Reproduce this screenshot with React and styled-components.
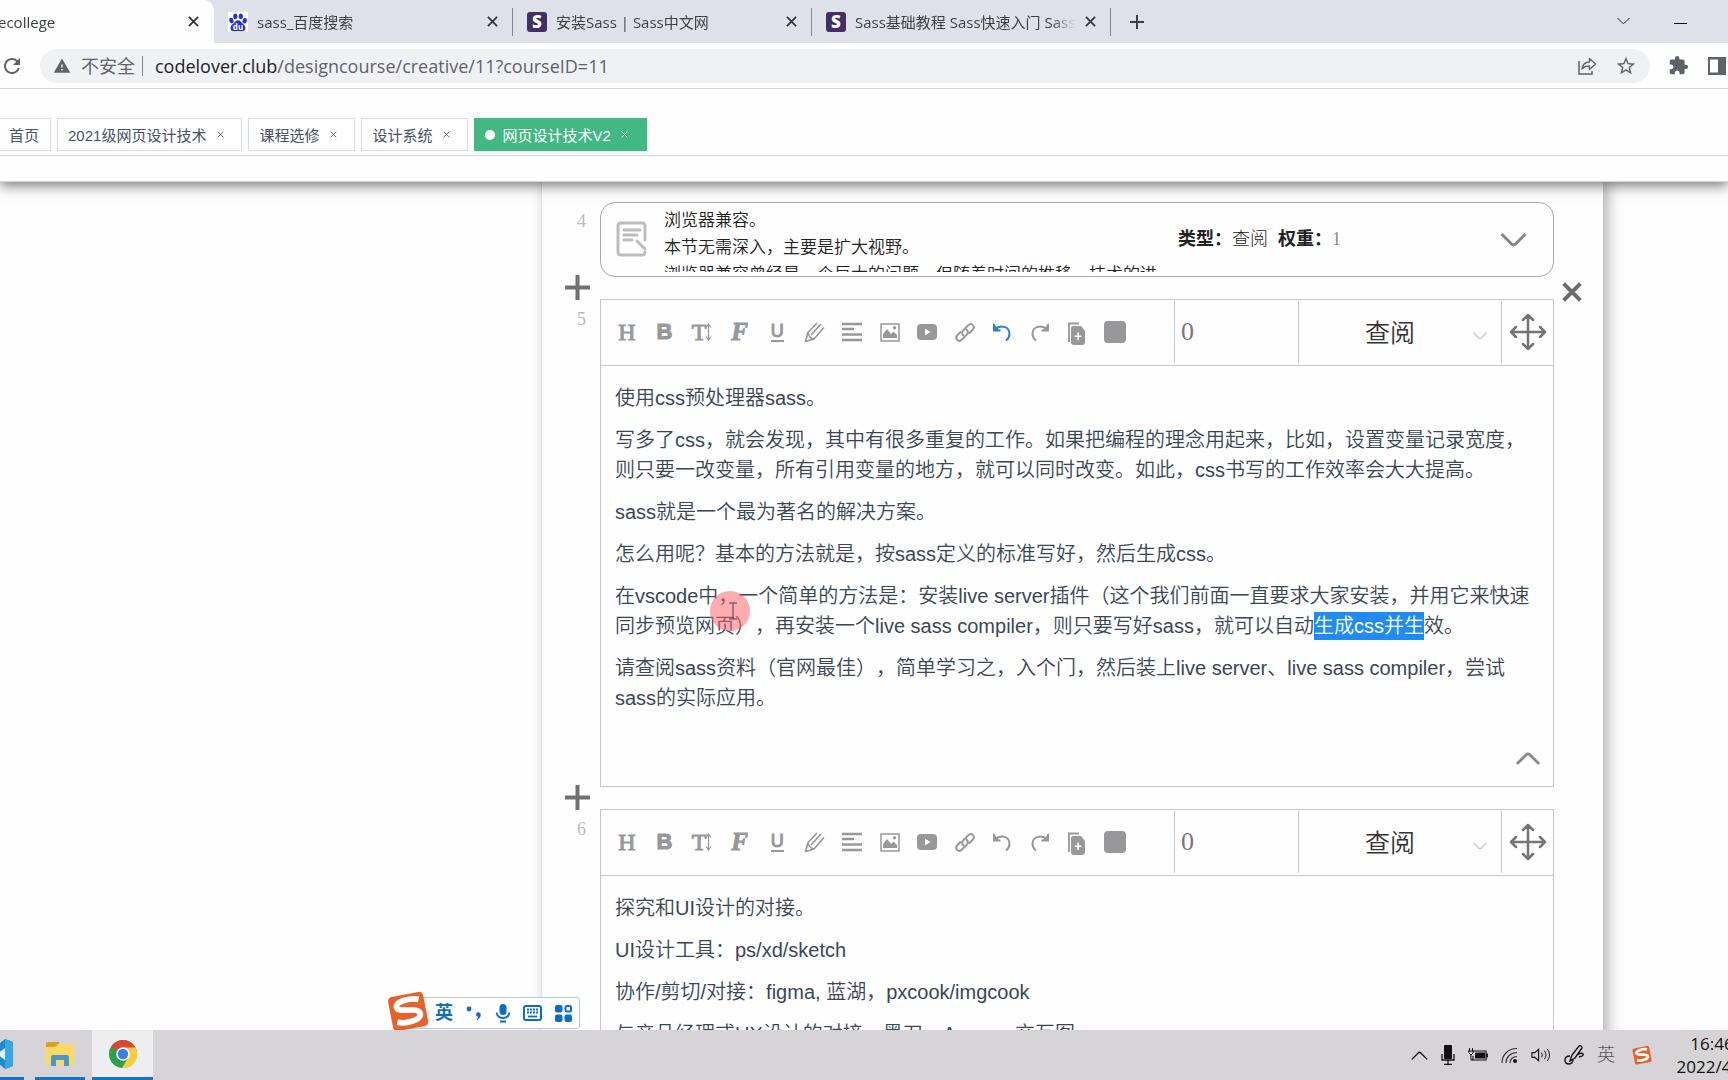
import React from "react";
import styled, { createGlobalStyle, css } from "styled-components";
import {
  MdExtension,
  MdStarBorder,
  MdRefresh,
  MdWarning,
} from "react-icons/md";

const GlobalStyle = createGlobalStyle`
  * {
    box-sizing: border-box;
  }

  body {
    margin: 0;
    background: #fefefe;
    color: #2c3e50;
    font-family: "Liberation Sans", "Noto Sans CJK SC", sans-serif;
    text-spacing-trim: space-all;
  }

  button {
    padding: 0;
    border: 0;
    background: none;
    color: inherit;
    font: inherit;
  }

  svg {
    flex-shrink: 0;
  }
`;

const browserTabs = [
  { title: "sass_百度搜索", icon: "baidu" },
  { title: "安装Sass | Sass中文网", icon: "sass" },
  { title: "Sass基础教程 Sass快速入门 Sass", icon: "sass" },
];

const pageTags = [
  { title: "2021级网页设计技术" },
  { title: "课程选修" },
  { title: "设计系统" },
  { title: "网页设计技术V2", active: true },
];

const CloseIcon = ({ size = 11, width = 2 }) => (
  <svg width={size} height={size} viewBox="0 0 12 12" aria-hidden="true">
    <path d="M1 1l10 10M11 1L1 11" stroke="currentColor" strokeWidth={width} />
  </svg>
);

const PlusIcon = ({ size, width }) => (
  <svg width={size} height={size} viewBox={`0 0 ${size} ${size}`} aria-hidden="true">
    <path
      d={`M${size / 2} 0V${size}M0 ${size / 2}H${size}`}
      stroke="currentColor"
      strokeWidth={width}
    />
  </svg>
);

const ChevronIcon = ({ width, height, stroke, up }) => (
  <svg width={width} height={height} viewBox="0 0 26 14" fill="none" aria-hidden="true">
    <path
      d={up ? "M1 13L11 3q2-2 4 0L25 13" : "M1 1l10 10q2 2 4 0L25 1"}
      stroke="currentColor"
      strokeWidth={stroke}
    />
  </svg>
);

const BaiduIcon = () => (
  <svg width="20" height="20" viewBox="0 0 20 20" aria-hidden="true">
    <rect width="20" height="20" fill="#fff" />
    <g fill="#2a32cf">
      <ellipse cx="3.4" cy="8.6" rx="2.1" ry="2.8" transform="rotate(-12 3.4 8.6)" />
      <ellipse cx="7.3" cy="4.3" rx="2.1" ry="2.9" />
      <ellipse cx="12.8" cy="4.3" rx="2.1" ry="2.9" />
      <ellipse cx="16.7" cy="8.8" rx="2.1" ry="2.8" transform="rotate(12 16.7 8.8)" />
      <path d="M10 8.2c2 0 3 1.6 4.3 3 1.6 1.5 3.2 2.5 3.2 4.7 0 2.2-1.5 3.4-3.500 3.4-1.500 0-2.500-.3-4-.3s-2.500.3-4 .3c-2 0-3.500-1.200-3.500-3.400 0-2.200 1.600-3.200 3.200-4.700C7 9.800 8 8.200 10 8.200z" />
    </g>
    <text x="10" y="17.500" fill="#fff" fontSize="8" fontWeight="700" textAnchor="middle">
      du
    </text>
  </svg>
);

const ShareIcon = () => (
  <svg width="20" height="20" viewBox="0 0 20 20" fill="none" aria-hidden="true">
    <path d="M2 5v13h13v-3" stroke="currentColor" strokeWidth="1.500" />
    <path
      d="M5 13c.6-4.500 3.200-6.800 7.500-7V2.500L18.500 8l-6 5.500V10C9 10 6.800 11 5 13z"
      stroke="currentColor"
      strokeWidth="1.400"
      strokeLinejoin="round"
    />
  </svg>
);

const SidePanelIcon = () => (
  <svg width="20" height="20" viewBox="0 0 20 20" aria-hidden="true">
    <path d="M1 1h18v18H1zM3 3.500v13h8v-13z" fill="currentColor" fillRule="evenodd" />
  </svg>
);

const NoteIcon = () => (
  <svg width="32" height="36" viewBox="0 0 32 36" fill="none" aria-hidden="true">
    <g stroke="#bdbdbf" strokeWidth="3" strokeLinecap="round">
      <path d="M29 19V5q0-3-3-3H5Q2 2 2 5v26q0 3 3 3h21q3 0 3-3" />
      <path d="M8 9h16M8 14h13M8 19h8M21 20l8 8" />
    </g>
  </svg>
);

const MoveIcon = () => (
  <svg width="38" height="38" viewBox="0 0 38 38" fill="none" aria-hidden="true">
    <path
      d="M19 2v34M2 19h34M14 7l5-5 5 5M14 31l5 5 5-5M7 14l-5 5 5 5M31 14l5 5-5 5"
      stroke="#747477"
      strokeWidth="2.500"
      strokeLinecap="round"
      strokeLinejoin="round"
    />
  </svg>
);

const UndoPath = "M3 3v6.500h6.500M4 8.500C9 3.500 18.500 5 18.500 13c0 3-1.500 5-3.500 6.500";

const toolIcons = {
  size: (
    <path d="M18.500 4v14M16 6.500L18.500 3 21 6.500M16 15.500l2.500 3.500 2.500-3.500" fill="none" stroke="currentColor" strokeWidth="1.200" />
  ),
  brush: (
    <g fill="none" stroke="currentColor" strokeWidth="1.700" strokeLinejoin="round">
      <path d="M13 2L4 11.500 1.500 20.500 10 18 20 6.500" />
      <path d="M7 14L17 3M4 11.500q.5 5 6 6.500" />
    </g>
  ),
  align: (
    <path d="M1 3h20M1 8h12M1 13.500h20M1 19h20" stroke="currentColor" strokeWidth="2.600" fill="none" />
  ),
  image: (
    <>
      <path d="M2 3h18v17H2z" fill="none" stroke="currentColor" strokeWidth="1.500" />
      <path d="M4 17v-4l4-5 4 5 2.500-2.500L18 14v3z" fill="currentColor" />
      <circle cx="15.500" cy="6.800" r="1.700" fill="currentColor" />
    </>
  ),
  video: (
    <path fillRule="evenodd" d="M5 3h12q4 0 4 4v8q0 4-4 4H5q-4 0-4-4V7q0-4 4-4zM9 7.500v7l5.500-3.500z" fill="currentColor" />
  ),
  link: (
    <g fill="none" stroke="currentColor" strokeWidth="1.900" strokeLinecap="round">
      <path d="M9.500 14.500c-2-2-1.500-4 0-5.500L14 4.500c3.500-3.500 8 1 4.500 4.500l-3 3" />
      <path d="M12.500 8.500c2 2 1.500 4 0 5.500L8 18.500c-3.500 3.500-8-1-4.500-4.500l3-3" />
    </g>
  ),
  undo: (
    <>
      <path d={UndoPath} fill="none" stroke="currentColor" strokeWidth="2" />
      <path d="M2 2v8h7z" fill="currentColor" />
    </>
  ),
  redo: (
    <g transform="matrix(-1 0 0 1 22 0)">
      <path d={UndoPath} fill="none" stroke="currentColor" strokeWidth="2" />
      <path d="M2 2v8h7z" fill="currentColor" />
    </g>
  ),
  copy: (
    <>
      <path d="M3 21V2.500h10" fill="none" stroke="currentColor" strokeWidth="1.800" />
      <path fillRule="evenodd" d="M7 5h8l4 5v11q0 3-3 3H8q-3 0-3-3V7q0-2 2-2zM11.300 11.500v3h-2.500v1.600h2.500v3h1.600v-3h2.500v-1.600h-2.500v-3z" fill="currentColor" />
    </>
  ),
  block: <rect x="0" y="0" width="22" height="22" rx="4" fill="currentColor" />,
};

const tools = [
  { name: "标题", glyph: "H", look: "serif" },
  { name: "加粗", glyph: "B", look: "bold" },
  { name: "字号", glyph: "T", look: "serif", icon: "size" },
  { name: "字体", glyph: "F", look: "script" },
  { name: "下划线", glyph: "U", look: "underline" },
  { name: "文字颜色", icon: "brush" },
  { name: "对齐", icon: "align" },
  { name: "图片", icon: "image" },
  { name: "视频", icon: "video" },
  { name: "链接", icon: "link" },
  { name: "撤销", icon: "undo" },
  { name: "恢复", icon: "redo" },
  { name: "复制", icon: "copy" },
  { name: "背景", icon: "block" },
];

const SogouIcon = ({ size }) => (
  <svg width={size} height={size} viewBox="0 0 40 40" aria-hidden="true">
    <g transform="rotate(-11 20 20)">
      <rect x="3" y="4" width="34" height="33" rx="4" fill="#e9602d" />
      <path
        d="M32 11C25 8 10 8.500 10 14.500c0 6 21 3 21 10 0 6.500-15 7.500-23 4"
        fill="none"
        stroke="#fff"
        strokeWidth="5.500"
      />
    </g>
  </svg>
);

const Editor = ({ number, undoActive, cursor, children }) => (
  <EditorRow>
    <Gutter>
      <AddButton aria-label="添加">
        <PlusIcon size={25} width={4} />
      </AddButton>
      <RowNumber>{number}</RowNumber>
    </Gutter>
    <EditorBox>
      <Toolbar>
        <Tools>
          {tools.map((tool) => (
            <ToolButton
              key={tool.name}
              aria-label={tool.name}
              $active={undoActive && tool.icon === "undo"}
            >
              {tool.glyph && <Glyph $look={tool.look}>{tool.glyph}</Glyph>}
              {tool.icon && (
                <ToolSvg viewBox="0 0 22 22" $over={!!tool.glyph} aria-hidden="true">
                  {toolIcons[tool.icon]}
                </ToolSvg>
              )}
            </ToolButton>
          ))}
        </Tools>
        <WeightInput aria-label="权重" defaultValue="0" />
        <SelectWrap>
          <TypeSelect aria-label="类型" defaultValue="查阅">
            <option>查阅</option>
          </TypeSelect>
          <SelectArrow>
            <ChevronIcon width={14} height={8} stroke={2} />
          </SelectArrow>
        </SelectWrap>
        <MoveButton aria-label="移动">
          <MoveIcon />
        </MoveButton>
      </Toolbar>
      <EditorText
        contentEditable
        suppressContentEditableWarning
        spellCheck={false}
        role="textbox"
        aria-label="内容"
      >
        {children}
      </EditorText>
      <EditorFooter>
        <FoldButton aria-label="收起">
          <ChevronIcon width={26} height={13} stroke={3} up />
        </FoldButton>
      </EditorFooter>
      {cursor && (
        <CursorSpot>
          <svg width="8" height="18" viewBox="0 0 8 18" aria-hidden="true">
            <path d="M0 1h8M0 17h8M4 1v16" stroke="#444" strokeWidth="1" />
          </svg>
        </CursorSpot>
      )}
    </EditorBox>
    <RowEnd>
      {cursor && (
        <RemoveButton aria-label="删除">
          <CloseIcon size={20} width={2.4} />
        </RemoveButton>
      )}
    </RowEnd>
  </EditorRow>
);

const BrowserBar = () => (
  <Browser>
    <TabStrip>
      <ActiveTab>
        <TabTitle>ecollege</TabTitle>
        <TabClose aria-label="关闭">
          <CloseIcon />
        </TabClose>
      </ActiveTab>
      {browserTabs.map((tab) => (
        <BrowserTab key={tab.title}>
          {tab.icon === "baidu" ? <BaiduIcon /> : <SassIcon>S</SassIcon>}
          <TabTitle>{tab.title}</TabTitle>
          <TabClose aria-label="关闭">
            <CloseIcon />
          </TabClose>
        </BrowserTab>
      ))}
      <NewTab aria-label="新标签页">
        <PlusIcon size={14} width={2} />
      </NewTab>
      <WindowButtons>
        <button aria-label="搜索标签页">
          <ChevronIcon width={13} height={8} stroke={2} />
        </button>
        <button aria-label="最小化">
          <svg width="13" height="2" aria-hidden="true">
            <rect width="13" height="1" fill="#111" />
          </svg>
        </button>
      </WindowButtons>
    </TabStrip>
    <AddressRow>
      <IconButton aria-label="刷新">
        <MdRefresh size={24} />
      </IconButton>
      <AddressBar>
        <MdWarning size={18} />
        <Insecure>不安全</Insecure>
        <Url>
          <b>codelover.club</b>/designcourse/creative/11?courseID=11
        </Url>
        <IconButton aria-label="分享">
          <ShareIcon />
        </IconButton>
        <IconButton aria-label="收藏">
          <MdStarBorder size={22} />
        </IconButton>
      </AddressBar>
      <IconButton aria-label="扩展程序">
        <MdExtension size={21} />
      </IconButton>
      <IconButton aria-label="侧边栏">
        <SidePanelIcon />
      </IconButton>
    </AddressRow>
  </Browser>
);

const TagBar = () => (
  <Header>
    <Tags>
      <HomeTag href="#home">首页</HomeTag>
      {pageTags.map((tag) => (
        <Tag key={tag.title} $active={tag.active}>
          {tag.active && <Dot />}
          <TagLink href="#tag">{tag.title}</TagLink>
          <TagClose aria-label="关闭">
            <CloseIcon size={7} width={1.4} />
          </TagClose>
        </Tag>
      ))}
    </Tags>
  </Header>
);

const ImeBar = () => (
  <Ime>
    <ImeLogo>
      <SogouIcon size={42} />
    </ImeLogo>
    <ImeText>英</ImeText>
    <svg width="16" height="16" viewBox="0 0 16 16" fill="#0f6cc4" aria-hidden="true">
      <circle cx="3" cy="4" r="2.400" />
      <path d="M10 9.500a2.400 2.400 0 1 1 4.800.3q-.2 3.700-3.600 5.200l-.6-1q1.600-1 1.700-2.200-2.200 0-2.300-2.300z" />
    </svg>
    <svg width="16" height="20" viewBox="0 0 16 20" fill="none" aria-hidden="true">
      <rect x="4.500" y="1" width="7" height="11" rx="3.500" fill="#0f6cc4" />
      <path d="M1.500 9.500q1 5.500 6.500 5.500t6.500-5.500M5 18.500h6" stroke="#0f6cc4" strokeWidth="1.800" />
    </svg>
    <svg width="19" height="16" viewBox="0 0 19 16" fill="none" stroke="#0f6cc4" aria-hidden="true">
      <rect x="1" y="1" width="17" height="14" rx="2" strokeWidth="2" />
      <path d="M4 4.500h11M4 7.500h11" strokeWidth="1.800" strokeDasharray="2 1" />
      <path d="M5 11.500h9" strokeWidth="1.800" />
    </svg>
    <svg width="17" height="17" viewBox="0 0 17 17" fill="#0f6cc4" aria-hidden="true">
      <rect width="7.500" height="7.500" rx="2" />
      <rect y="9.500" width="7.500" height="7.500" rx="2" />
      <rect x="9.500" y="9.500" width="7.500" height="7.500" rx="2" />
      <rect x="10.500" y="1" width="5.500" height="5.500" rx="1.500" fill="none" stroke="#0f6cc4" strokeWidth="2" />
    </svg>
  </Ime>
);

const SystemBar = () => (
  <Taskbar>
    <Task $width={24} aria-label="Visual Studio Code">
      <svg width="28" height="30" viewBox="0 0 28 30" aria-hidden="true">
        <path d="M20 0l8 3v24l-8 3L4 16v-3z" fill="#2389ca" />
        <path d="M20 0l8 3v24l-8 3z" fill="#35a7e8" />
        <path d="M20 9v12l-8-6z" fill="#e4edf3" />
      </svg>
    </Task>
    <Task $width={50} aria-label="文件资源管理器">
      <svg width="28" height="24" viewBox="0 0 28 24" aria-hidden="true">
        <path d="M0 2q0-2 2-2h11v5H0z" fill="#d9a01f" />
        <path d="M0 5h9l3-3h14q2 0 2 2v19H0z" fill="#fcd965" />
        <path d="M5 24V15q0-2 2-2h14q2 0 2 2v9h-5v-6h-8v6z" fill="#4b97cc" />
      </svg>
    </Task>
    <Task $width={61} $open aria-label="Google Chrome">
      <svg width="28" height="28" viewBox="0 0 28 28" aria-hidden="true">
        <circle cx="14" cy="14" r="14" fill="#2f9e4f" />
        <path d="M14 14L1.900 7A14 14 0 0 1 26.100 7z" fill="#dd4436" />
        <path d="M14 7.500h12.500A14 14 0 0 1 13 28l6.500-11z" fill="#fbcd36" />
        <circle cx="14" cy="14" r="6.800" fill="#fff" />
        <circle cx="14" cy="14" r="5.200" fill="#3b7de9" />
      </svg>
    </Task>
    <Tray>
      <ChevronIcon width={17} height={9} stroke={2} up />
      <svg width="14" height="20" viewBox="0 0 14 20" aria-hidden="true">
        <rect x="3" width="8" height="14" rx="1" fill="#111" />
        <path d="M1 9v6h12V9M7 15v4M3 19.300h8" fill="none" stroke="#111" strokeWidth="1.300" />
      </svg>
      <svg width="20" height="14" viewBox="0 0 20 14" aria-hidden="true">
        <path d="M6 3h12v9H5V8" fill="none" stroke="#111" strokeWidth="1.200" />
        <path d="M7 4.500h10v6H7zM18.500 5.500H20v4h-1.500z" fill="#111" />
        <path d="M1.500 0v3M4.500 0v3M0 3h6M1 3v2l2 2 2-2V3M3 7v5h2" fill="none" stroke="#111" />
      </svg>
      <svg width="17" height="16" viewBox="0 0 17 16" fill="none" aria-hidden="true">
        <path d="M1 16C1 8 7 1.500 16 1.500M5 16c0-6 4.500-10.500 11-10.500M9 16c0-4 3-6.500 7-6.500" stroke="#333" strokeWidth="1.100" />
        <circle cx="14" cy="14" r="2" fill="#111" />
      </svg>
      <svg width="20" height="16" viewBox="0 0 21 16" fill="none" stroke="#111" aria-hidden="true">
        <path d="M1 5.500h3L8 2v12l-4-3.500H1z" strokeWidth="1.200" />
        <path d="M11 5.500q2 2.500 0 5M14 3.500q3.500 4.500 0 9M17 1.500q5 6.500 0 13" />
      </svg>
      <svg width="20" height="20" viewBox="0 0 20 20" fill="none" stroke="#111" aria-hidden="true">
        <path d="M6 16l2-6 7-9q3-1 3 2l-7 10zM6 11q-5 0-5 4t4 4 4-5M13 10q5-3 6-1t-4 3" strokeWidth="1.400" />
      </svg>
      <TrayText>英</TrayText>
      <SogouIcon size={20} />
      <Clock>
        <span>16:46</span>
        <span>2022/4/7</span>
      </Clock>
    </Tray>
  </Taskbar>
);

export default function App() {
  return (
    <Screen>
      <GlobalStyle />
      <BrowserBar />
      <TagBar />
      <Main>
        <Panel>
          <SummaryRow>
            <Gutter>
              <RowNumber>4</RowNumber>
            </Gutter>
            <SummaryCard>
              <NoteIcon />
              <SummaryText>
                <div>浏览器兼容。</div>
                <div>本节无需深入，主要是扩大视野。</div>
                <div>浏览器兼容曾经是一个巨大的问题，但随着时间的推移，技术的进</div>
              </SummaryText>
              <SummaryMeta>
                <strong>类型：</strong>
                <span>查阅</span>
                <strong>权重：</strong>
                <MetaNumber>1</MetaNumber>
              </SummaryMeta>
              <ExpandButton aria-label="展开">
                <ChevronIcon width={27} height={14} stroke={3} />
              </ExpandButton>
            </SummaryCard>
            <RowEnd />
          </SummaryRow>
          <Editor number={5} undoActive cursor>
            <p>使用css预处理器sass。</p>
            <p>
              写多了css，就会发现，其中有很多重复的工作。如果把编程的理念用起来，比如，设置变量记录宽度，则只要一改变量，所有引用变量的地方，就可以同时改变。如此，css书写的工作效率会大大提高。
            </p>
            <p>sass就是一个最为著名的解决方案。</p>
            <p>怎么用呢？基本的方法就是，按sass定义的标准写好，然后生成css。</p>
            <p>
              在vscode中，一个简单的方法是：安装live server插件（这个我们前面一直要求大家安装，并用它来快速同步预览网页），再安装一个live sass compiler，则只要写好sass，就可以自动
              <Selected>生成css并生</Selected>效。
            </p>
            <p>
              请查阅sass资料（官网最佳），简单学习之，入个门，然后装上live server、live sass compiler，尝试sass的实际应用。
            </p>
          </Editor>
          <Editor number={6}>
            <p>探究和UI设计的对接。</p>
            <p>UI设计工具：ps/xd/sketch</p>
            <p>协作/剪切/对接：figma, 蓝湖，pxcook/imgcook</p>
            <p>与产品经理或UX设计的对接，墨刀、Axure，交互图</p>
          </Editor>
        </Panel>
        <ImeBar />
      </Main>
      <SystemBar />
    </Screen>
  );
}

const Screen = styled.div`
  height: 100vh;
  display: flex;
  flex-direction: column;
  overflow: hidden;
`;

const Browser = styled.div`
  position: relative;
  z-index: 3;
  flex: none;
  background: #fefefe;
  border-bottom: 1px solid #d6d6d9;
  color: #3c4043;
  font-family: "Open Sans", "Noto Sans CJK SC", sans-serif;
  font-size: 15px;
`;

const TabStrip = styled.div`
  height: 43px;
  display: flex;
  align-items: center;
  background: #dee1ea;
`;

const ActiveTab = styled.div`
  width: 216px;
  height: 43px;
  display: flex;
  align-items: center;
  padding: 0 15px 0 0;
  margin-left: -2px;
  background: #fefefe;
  border-radius: 0 10px 0 0;
`;

const BrowserTab = styled.div`
  width: 299px;
  height: 28px;
  display: flex;
  align-items: center;
  gap: 9px;
  padding: 0 14px 0 14px;
  border-right: 1px solid #85888f;
`;

const TabTitle = styled.span`
  flex: 1;
  overflow: hidden;
  white-space: nowrap;
  mask-image: linear-gradient(to left, transparent, #000 24px);
`;

const TabClose = styled.button`
  display: flex;
  align-items: center;
  color: #33363a;
`;

const SassIcon = styled.span`
  width: 20px;
  height: 20px;
  flex: none;
  border-radius: 3px;
  background: #432f63;
  color: #fff;
  font-weight: 800;
  font-size: 17px;
  line-height: 20px;
  text-align: center;
`;

const NewTab = styled.button`
  display: flex;
  margin-left: 19px;
`;

const WindowButtons = styled.div`
  flex: 1;
  display: flex;
  align-items: center;
  justify-content: flex-end;
  gap: 44px;
  padding: 0 41px 6px 0;
  color: #222;
`;

const AddressRow = styled.div`
  height: 45px;
  display: flex;
  align-items: center;
  gap: 18px;
  color: #5f6368;
`;

const AddressBar = styled.div`
  flex: 1;
  height: 34px;
  display: flex;
  align-items: center;
  gap: 18px;
  margin-left: -18px;
  padding: 0 12px 0 13px;
  border-radius: 17px;
  background: #f0f1f5;
`;

const Insecure = styled.span`
  margin-left: -8px;
  padding-right: 7px;
  border-right: 1px solid #85888f;
  font-size: 18px;
  line-height: 20px;
`;

const Url = styled.span`
  flex: 1;
  margin-left: -6px;
  font-size: 18px;
  line-height: 20px;

  b {
    font-weight: 400;
    color: #202124;
  }
`;

const IconButton = styled.button`
  display: flex;
  align-items: center;

  &:first-child {
    padding-right: 16px;
  }

  &:last-child {
    margin-right: 1px;
  }
`;

const Header = styled.header`
  position: relative;
  z-index: 2;
  flex: none;
  padding: 29px 0 25px;
  background: #fefefe;
  border-bottom: 1px solid #d3d3d3;
  box-shadow: 0 4px 12px rgba(0, 0, 0, 0.5);
`;

const Tags = styled.nav`
  display: flex;
  gap: 6px;
  padding-bottom: 4px;
  border-bottom: 1px solid #d8dadd;
  font-size: 15px;
`;

const tagBox = css`
  height: 33px;
  display: flex;
  align-items: center;
  border: 1px solid #d8dce5;
  color: #495060;
  background: #fff;
`;

const HomeTag = styled.a`
  ${tagBox}
  padding: 0 11px 0 9px;
  border-left: 0;
  text-decoration: none;
`;

const Tag = styled.div`
  ${tagBox}
  padding: 0 12px 0 10px;

  ${({ $active }) =>
    $active &&
    css`
      background: #42b983;
      border-color: #42b983;
      color: #fff;
    `}
`;

const Dot = styled.span`
  width: 10px;
  height: 10px;
  margin-right: 7px;
  border-radius: 50%;
  background: #fff;
`;

const TagLink = styled.a`
  color: inherit;
  text-decoration: none;
`;

const TagClose = styled.button`
  width: 18px;
  height: 18px;
  display: flex;
  align-items: center;
  justify-content: center;
  margin-left: 5px;
`;

const Main = styled.main`
  position: relative;
  flex: 1;
  min-height: 0;
  overflow: hidden;
`;

const Panel = styled.section`
  min-height: 100%;
  margin: 0 125px 0 541px;
  padding-top: 20px;
  border-left: 1px solid #e2e2e4;
  background: #fefefe;
  box-shadow: 5px 0 14px rgba(0, 0, 0, 0.3);
`;

const SummaryRow = styled.div`
  display: flex;
`;

const EditorRow = styled.div`
  display: flex;
  margin-bottom: 22px;
`;

const Gutter = styled.div`
  width: 58px;
  display: flex;
  flex-direction: column;
  align-items: flex-end;
  flex: none;
`;

const RowNumber = styled.span`
  padding: 9px 14px 0 0;
  color: #bcbcc0;
  font-family: "Liberation Serif", serif;
  font-size: 18px;
  line-height: 20px;
`;

const AddButton = styled.button`
  display: flex;
  margin: -24px 10px 0 0;
  color: #707073;
`;

const RowEnd = styled.div`
  width: 49px;
  flex: none;
`;

const RemoveButton = styled.button`
  display: flex;
  margin: -17px 0 0 8px;
  color: #6b6b6e;
`;

const SummaryCard = styled.article`
  flex: 1;
  min-width: 0;
  height: 75px;
  display: flex;
  align-items: center;
  margin-bottom: 22px;
  padding: 3px 26px 4px 15px;
  border: 1px solid #a9a9ab;
  border-radius: 15px;
  color: #222;
  font-size: 18px;
  line-height: 27px;
`;

const SummaryText = styled.div`
  width: 504px;
  height: 65px;
  margin: 0 10px 0 16px;
  overflow: hidden;
  font-size: 17px;
  font-weight: 350;
  white-space: nowrap;
`;

const SummaryMeta = styled.div`
  flex: 1;
  display: flex;
  align-items: center;
  font-weight: 300;

  strong {
    font-weight: 700;
  }

  span + strong {
    margin-left: 10px;
  }
`;

const MetaNumber = styled.span`
  color: #8a8a8d;
  font-family: "Liberation Serif", serif;
`;

const ExpandButton = styled.button`
  display: flex;
  padding-top: 2px;
  color: #87878a;
`;

const EditorBox = styled.article`
  position: relative;
  flex: 1;
  min-width: 0;
  min-height: 488px;
  display: flex;
  flex-direction: column;
  border: 1px solid #c6c6c9;
`;

const Toolbar = styled.div`
  height: 66px;
  display: flex;
  align-items: stretch;
  padding: 1px 0 2px;
  border-bottom: 1px solid #c6c6c9;
`;

const Tools = styled.div`
  flex: 1;
  display: flex;
  align-items: center;
  justify-content: space-between;
  padding: 0 48px 0 15px;
`;

const ToolButton = styled.button`
  position: relative;
  width: 22px;
  height: 22px;
  display: flex;
  align-items: center;
  justify-content: center;
  color: ${({ $active }) => ($active ? "#2f7dcd" : "#98989a")};
`;

const glyphLooks = {
  serif: css`
    font-family: "Liberation Serif", serif;
    font-size: 24px;
  `,
  bold: css`
    font-size: 22px;
    font-weight: 700;
  `,
  script: css`
    font-family: "Liberation Serif", serif;
    font-size: 25px;
    font-style: italic;
    font-weight: 700;
  `,
  underline: css`
    font-size: 18px;
    line-height: 18px;
    border-bottom: 2px solid;
  `,
};

const Glyph = styled.span`
  line-height: 22px;
  -webkit-text-stroke: 1px currentColor;
  ${({ $look }) => glyphLooks[$look]}
`;

const ToolSvg = styled.svg`
  width: 22px;
  height: 22px;
  overflow: visible;
  margin-left: ${({ $over }) => ($over ? "-16px" : "0")};
`;

const WeightInput = styled.input`
  width: 124px;
  padding: 0 6px;
  border: 0;
  border-left: 1px solid #c6c6c9;
  border-radius: 0;
  background: none;
  color: #77777b;
  font-family: "Liberation Serif", serif;
  font-size: 26px;
  outline: none;
`;

const SelectWrap = styled.div`
  position: relative;
  width: 203px;
  display: flex;
  border-left: 1px solid #c6c6c9;
`;

const TypeSelect = styled.select`
  flex: 1;
  padding: 0 20px 3px 0;
  appearance: none;
  border: 0;
  background: none;
  color: #333;
  font-family: "Noto Sans CJK SC", sans-serif;
  font-size: 25px;
  font-weight: 350;
  text-align: center;
  text-align-last: center;
`;

const SelectArrow = styled.span`
  position: absolute;
  right: 14px;
  top: 50%;
  display: flex;
  color: #c0c0c4;
  pointer-events: none;
`;

const MoveButton = styled.button`
  width: 52px;
  display: flex;
  align-items: center;
  justify-content: center;
  border-left: 1px solid #c6c6c9;
`;

const EditorText = styled.div`
  flex: 1;
  padding: 17px 14px 0;
  color: #3a4753;
  font-size: 20px;
  font-weight: 350;
  line-height: 30px;
  outline: none;

  p {
    margin: 0 0 12px;
  }
`;

const Selected = styled.mark`
  padding: 3px 0;
  background: #1f8bf3;
  color: #fff;
`;

const EditorFooter = styled.div`
  display: flex;
  justify-content: flex-end;
  padding: 0 12px 21px;
`;

const FoldButton = styled.button`
  display: flex;
  color: #8b8b8e;
`;

const CursorSpot = styled.div`
  position: absolute;
  left: 109px;
  top: 291px;
  width: 40px;
  height: 40px;
  display: flex;
  align-items: center;
  justify-content: center;
  padding-left: 6px;
  border-radius: 50%;
  background: rgba(255, 90, 100, 0.5);
  pointer-events: none;
`;

const Ime = styled.div`
  position: absolute;
  left: 398px;
  bottom: 1px;
  width: 182px;
  height: 32px;
  display: flex;
  align-items: center;
  justify-content: space-between;
  padding: 0 7px 0 36px;
  border: 1px solid #b4c8e2;
  border-radius: 3px;
  background: #fff;
`;

const ImeLogo = styled.span`
  position: absolute;
  left: -12px;
  bottom: -4px;
  display: flex;
`;

const ImeText = styled.span`
  color: #0f6cc4;
  font-size: 18px;
  font-weight: 700;
  line-height: 20px;
`;

const Taskbar = styled.footer`
  position: relative;
  z-index: 3;
  flex: none;
  height: 50px;
  display: flex;
  align-items: stretch;
  gap: 7px;
  overflow: hidden;
  background: #d6d4d6;
  color: #111;
`;

const Task = styled.button`
  width: ${({ $width }) => $width}px;
  display: flex;
  align-items: center;
  justify-content: center;
  border-bottom: 3px solid #1375c6;
  background: ${({ $open }) => ($open ? "#eeeef0" : "transparent")};

  &:first-child {
    justify-content: flex-end;
    padding-right: 11px;
    margin-right: 4px;
  }
`;

const Tray = styled.div`
  flex: 1;
  display: flex;
  align-items: center;
  justify-content: flex-end;
  gap: 13px;
  margin-right: -22px;
`;

const TrayText = styled.span`
  margin-right: 4px;
  color: #555;
  font-size: 18px;
  font-weight: 300;
  line-height: 20px;
`;

const Clock = styled.div`
  width: 76px;
  display: flex;
  flex-direction: column;
  align-items: center;
  margin-left: 9px;
  font-family: "Open Sans", sans-serif;
  font-size: 17px;
  line-height: 23px;
`;
